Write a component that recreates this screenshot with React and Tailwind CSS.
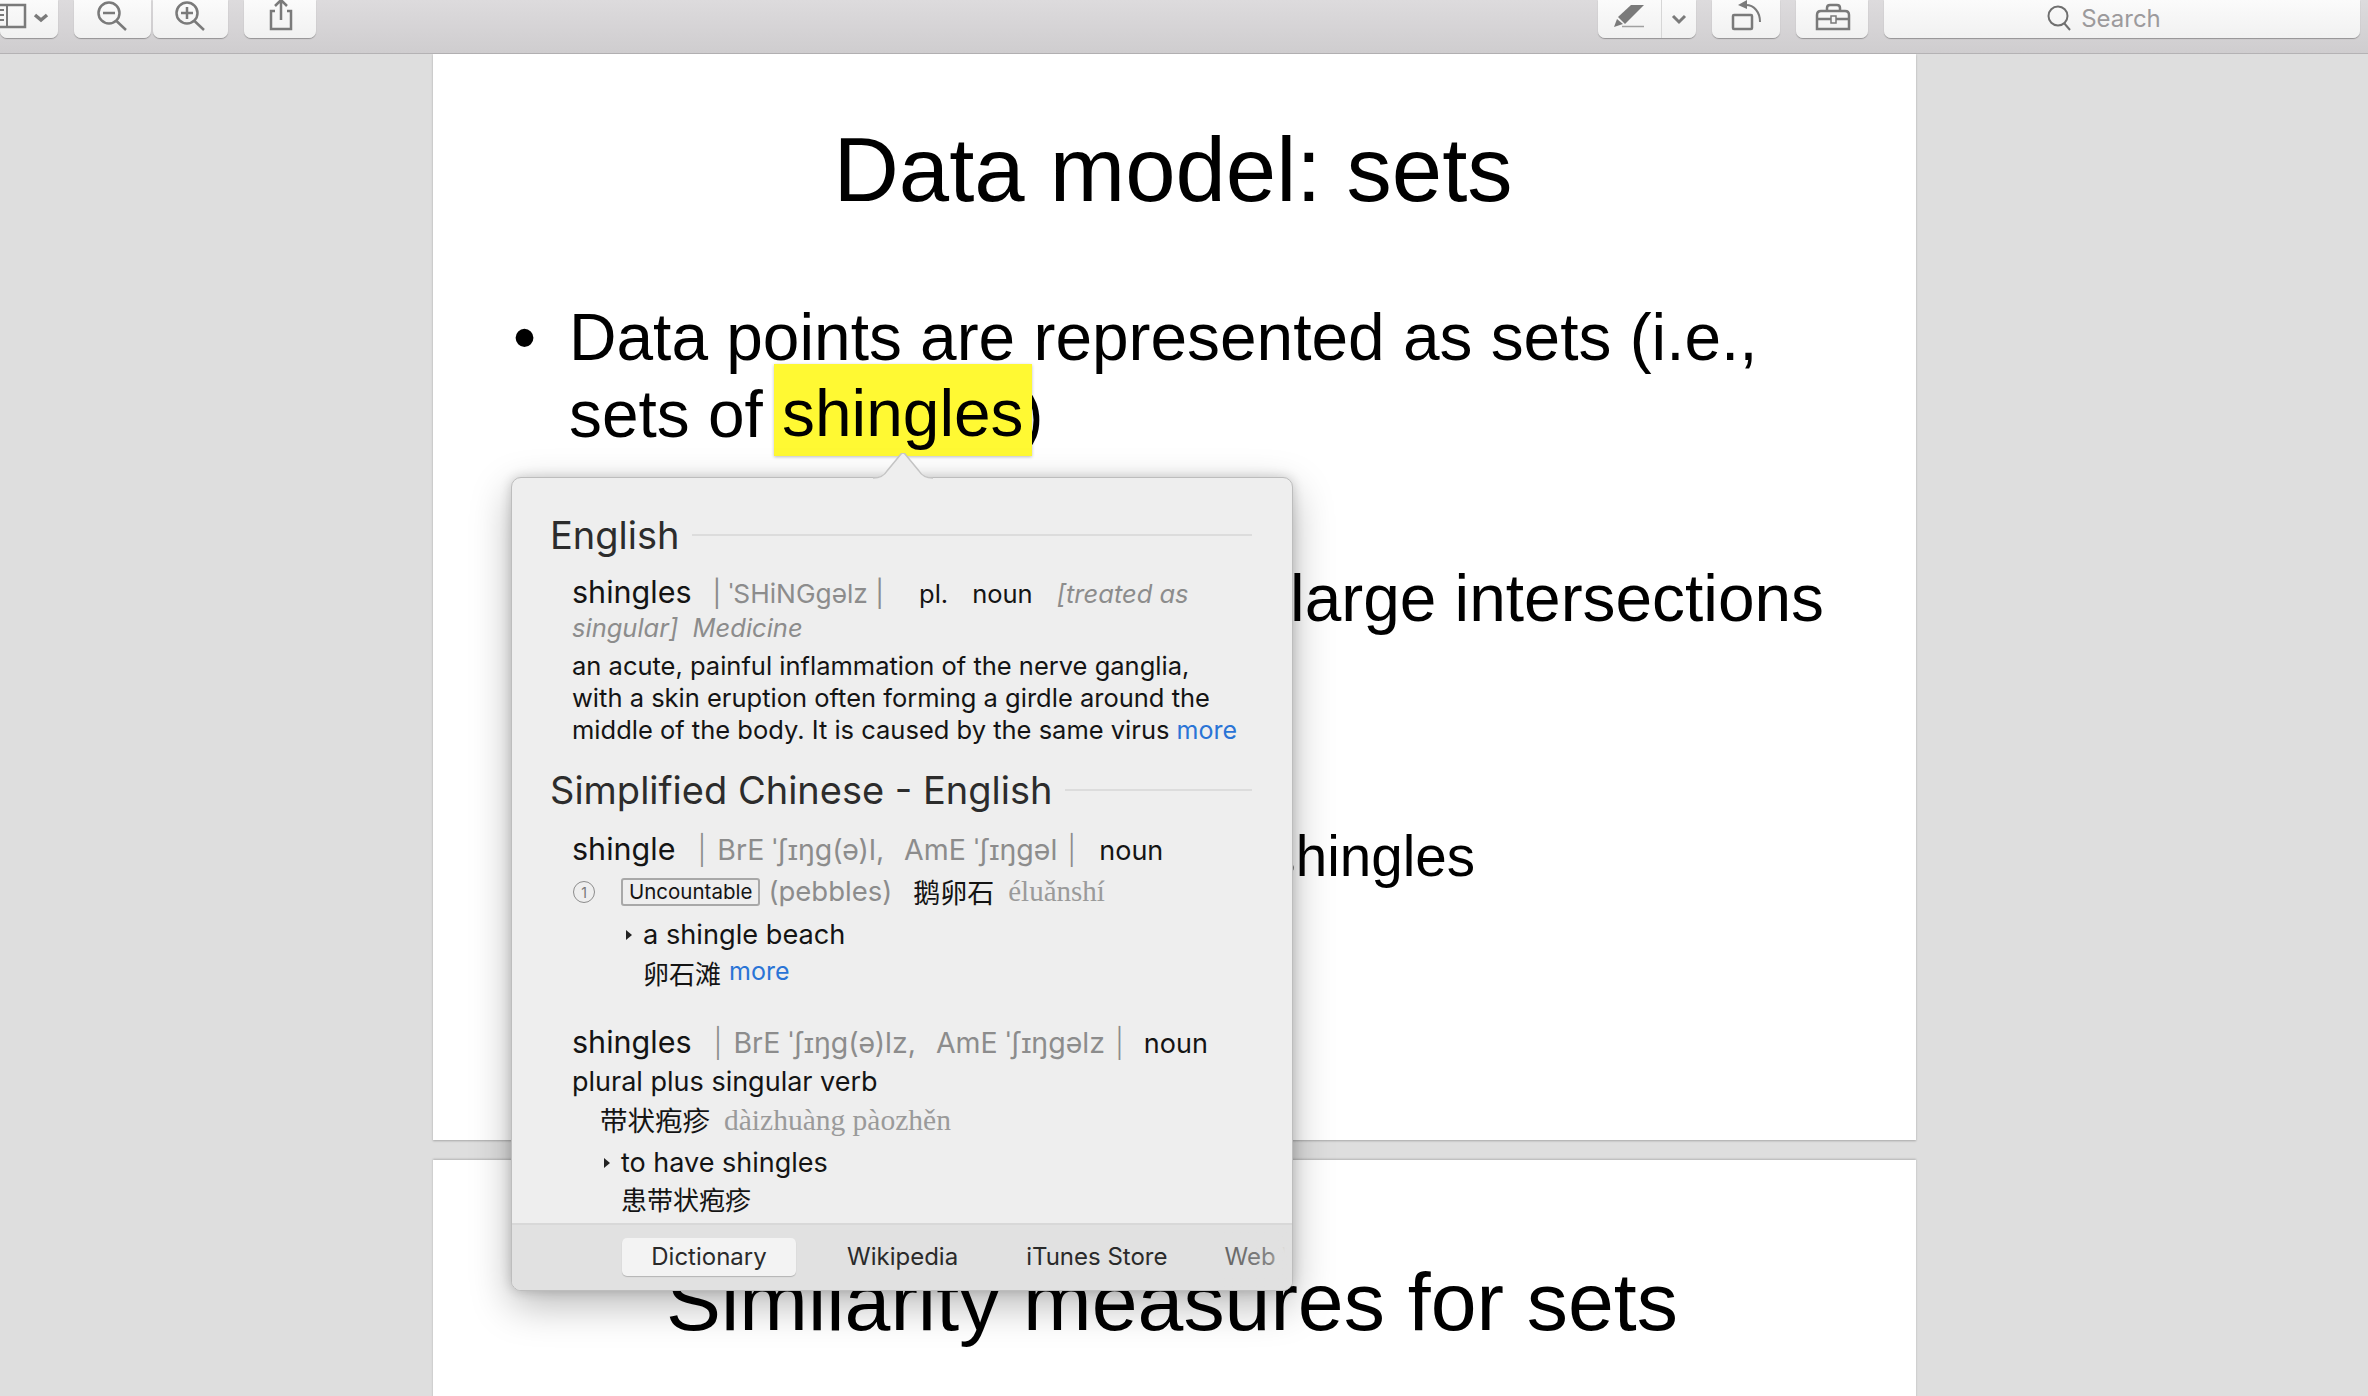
import React from "react";

const ui = "font-['Inter','Noto_Sans_CJK_SC',sans-serif]";
const cjk = "font-['Noto_Sans_CJK_SC',sans-serif]";
const pinyin = "font-['Liberation_Serif',serif] text-[#9a9a9a]";

function ToolButton({ className = "", children }) {
  return (
    <div
      className={
        "h-[38px] shrink-0 flex items-center justify-center rounded-b-[7px] bg-gradient-to-b from-[#fbfbfb] to-[#f1f1f1] shadow-[0_1px_1px_rgba(0,0,0,0.3)] " +
        className
      }
    >
      {children}
    </div>
  );
}

function Toolbar() {
  const stroke = { stroke: "#7a7a7a", strokeWidth: 2.5, fill: "none" };
  return (
    <div className="h-[54px] flex bg-gradient-to-b from-[#dddbdd] to-[#cfcdcf] border-b border-[#b4b2b4]">
      <ToolButton className="w-[58px]">
        <svg width="58" height="38">
          <path d="M-4 5H25V27H-4" {...stroke} />
          <path d="M7 5V27M-2 10H4M-2 15H4M-2 20H4" {...stroke} strokeWidth="2" />
          <path d="M35 15L41 20L47 15" {...stroke} strokeWidth="3.500" />
        </svg>
      </ToolButton>
      <ToolButton className="w-[77px] ml-[16px]">
        <svg width="77" height="38">
          <circle cx="35" cy="13" r="10.500" {...stroke} />
          <path d="M29 13H41M42.500 21L52 30" {...stroke} />
        </svg>
      </ToolButton>
      <ToolButton className="w-[75px] ml-[2px]">
        <svg width="75" height="38">
          <circle cx="34" cy="13" r="10.500" {...stroke} />
          <path d="M28 13H40M34 7V19M41.500 21L51 30" {...stroke} />
        </svg>
      </ToolButton>
      <ToolButton className="w-[72px] ml-[16px]">
        <svg width="72" height="38">
          <path d="M31 11H27V29H47V11H43" {...stroke} />
          <path d="M37 20V1M31 6L37 0L43 6" {...stroke} />
        </svg>
      </ToolButton>
      <div className="flex-1" />
      <ToolButton className="w-[98px]">
        <div className="w-[64px] h-full flex items-center justify-center border-r border-[#d6d6d6]">
          <svg width="63" height="38">
            <path d="M20 17L33 5H46L27 24Z" fill="#7a7a7a" />
            <path d="M19 19L16 27L25 24Z" fill="#7a7a7a" />
            <path d="M24 26.500H46" stroke="#a0a0a0" strokeWidth="1.500" />
          </svg>
        </div>
        <div className="flex-1 flex items-center justify-center">
          <svg width="16" height="12">
            <path d="M2 3L8 9L14 3" {...stroke} strokeWidth="3" />
          </svg>
        </div>
      </ToolButton>
      <ToolButton className="w-[68px] ml-[16px]">
        <svg width="68" height="38">
          <rect x="21" y="15" width="19" height="14" rx="1" {...stroke} />
          <path d="M34 5C42 5 48 12 48 22" {...stroke} strokeWidth="2" />
          <path d="M26 5L35 0V9Z" fill="#7a7a7a" />
        </svg>
      </ToolButton>
      <ToolButton className="w-[72px] ml-[16px]">
        <svg width="72" height="38">
          <path d="M21 19V15Q21 11 25 11H49Q53 11 53 15V29H21ZM21 19H53" {...stroke} />
          <path d="M31 11V8Q31 5 34 5H41Q44 5 44 8V11" {...stroke} />
          <rect x="35" y="16" width="5" height="7" fill="#f6f6f6" stroke="#7a7a7a" strokeWidth="1.500" />
        </svg>
      </ToolButton>
      <ToolButton className="w-[476px] ml-[16px] mr-[8px] gap-[10px] pr-[36px]">
        <svg width="24" height="38">
          <circle cx="11" cy="16" r="9.500" stroke="#6f6f6f" strokeWidth="2" fill="none" />
          <path d="M17 23L23 30" stroke="#6f6f6f" strokeWidth="2" />
        </svg>
        <span className={ui + " text-[24px] leading-[34px] text-[#9c9a9c]"}>Search</span>
      </ToolButton>
    </div>
  );
}

function Heading({ children }) {
  return (
    <div className="h-[40px] flex items-center gap-[12px] pl-[38px] pr-[40px]">
      <span className={"text-[38px] leading-[40px] text-[#2c2c2c] whitespace-nowrap"}>{children}</span>
      <div className="flex-1 h-[2px] bg-[#dcdcdc]" />
    </div>
  );
}

function Triangle() {
  return (
    <svg width="8" height="12" className="shrink-0">
      <path d="M1 1L7 6L1 11Z" fill="#222" />
    </svg>
  );
}

function Pron({ bre, ame }) {
  return (
    <span className="ml-[22px] text-[28.500px] text-[#8c8c8c]">
      <span className="font-light mr-[11px]">|</span>
      <span>{bre}</span>
      <span className="ml-[20px]">{ame}</span>
      <span className="font-light ml-[10px]">|</span>
    </span>
  );
}

function Popover() {
  return (
    <div className="absolute left-[511px] top-[477px] w-[782px] h-[814px] z-20">
      {/* tail */}
      <svg width="60" height="26" className="absolute left-[362px] top-[-24px] z-10">
        <path
          d="M0 25Q10 25 14 18L28 1Q30 -1 32 1L46 18Q50 25 60 25"
          fill="#eeeeee"
          stroke="#c4c4c4"
          strokeWidth="1.500"
        />
      </svg>
      <div
        className={
          ui +
          " w-full h-full flex flex-col rounded-[10px] overflow-hidden bg-[#eeeeee] border border-[#bdbdbd] shadow-[0_0_12px_rgba(0,0,0,0.18),0_14px_40px_rgba(0,0,0,0.28)] text-[#141414]"
        }
      >
        <div className="h-[745px] shrink-0 overflow-hidden pt-[37px]">
          <Heading>English</Heading>

          <div className="pl-[60px] pr-[30px] mt-[19px]">
            <div className="h-[36px] flex items-baseline whitespace-nowrap">
              <span className="text-[30.500px] leading-[36px]">shingles</span>
              <span className="ml-[21px] text-[26.300px] text-[#8c8c8c]">| ˈSHiNGgəlz |</span>
              <span className="ml-[35px] text-[25.500px]">pl.</span>
              <span className="ml-[24px] text-[25.500px]">noun</span>
              <span className="ml-[24px] text-[25.500px] italic text-[#8c8c8c]">[treated as</span>
            </div>
            <div className="mt-[2px] h-[32px] text-[25.500px] leading-[32px] italic text-[#8c8c8c] whitespace-nowrap">
              singular]&nbsp;&nbsp;Medicine
            </div>
            <p className="mt-[6px] text-[25.500px] leading-[32px] whitespace-nowrap">
              an acute, painful inflammation of the nerve ganglia,
              <br />
              with a skin eruption often forming a girdle around the
              <br />
              middle of the body. It is caused by the same virus{" "}
              <span className="text-[#2a74d6] text-[25px]">more</span>
            </p>
          </div>

          <div className="mt-[24px]">
            <Heading>Simplified Chinese - English</Heading>
          </div>

          <div className="pl-[60px] pr-[30px]">
            <div className="mt-[19px] h-[36px] flex items-baseline whitespace-nowrap">
              <span className="text-[30.500px] leading-[36px]">shingle</span>
              <Pron bre="BrE ˈʃɪŋg(ə)l," ame="AmE ˈʃɪŋgəl" />
              <span className="ml-[23px] text-[27px]">noun</span>
            </div>
            <div className="mt-[9px] h-[36px] flex items-center whitespace-nowrap">
              <span className="ml-[1px] w-[22px] h-[22px] flex items-center justify-center rounded-full border border-[#8c8c8c] text-[14px] text-[#777]">
                1
              </span>
              <span className="ml-[26px] h-[28px] px-[6px] flex items-center rounded-[3px] border-2 border-[#a8a8a8] text-[20.500px]">
                Uncountable
              </span>
              <span className="ml-[8px] text-[27.500px] text-[#8c8c8c]">(pebbles)</span>
              <span className={cjk + " ml-[21px] text-[27px]"}>鹅卵石</span>
              <span className={pinyin + " ml-[14px] text-[29px]"}>éluǎnshí</span>
            </div>
            <div className="mt-[9px] h-[32px] pl-[53px] flex items-center gap-[10px] text-[27.200px] whitespace-nowrap">
              <Triangle />
              <span>a shingle beach</span>
            </div>
            <div className="mt-[3px] h-[36px] pl-[71px] flex items-center gap-[8px] whitespace-nowrap">
              <span className={cjk + " text-[26px]"}>卵石滩</span>
              <span className="text-[25px] text-[#2a74d6]">more</span>
            </div>

            <div className="mt-[32px] h-[36px] flex items-baseline whitespace-nowrap">
              <span className="text-[30.500px] leading-[36px]">shingles</span>
              <Pron bre="BrE ˈʃɪŋg(ə)lz," ame="AmE ˈʃɪŋgəlz" />
              <span className="ml-[20px] text-[27px]">noun</span>
            </div>
            <div className="mt-[8px] h-[32px] text-[27px] leading-[32px] whitespace-nowrap">plural plus singular verb</div>
            <div className="mt-[4px] h-[36px] pl-[28px] flex items-center gap-[14px] whitespace-nowrap">
              <span className={cjk + " text-[27.500px]"}>带状疱疹</span>
              <span className={pinyin + " text-[29.500px]"}>dàizhuàng pàozhěn</span>
            </div>
            <div className="mt-[9px] h-[32px] pl-[31px] flex items-center gap-[10px] text-[27px] whitespace-nowrap">
              <Triangle />
              <span>to have shingles</span>
            </div>
            <div className={cjk + " mt-[1px] h-[36px] pl-[49px] flex items-center text-[26px] whitespace-nowrap"}>
              患带状疱疹
            </div>
          </div>
        </div>

        {/* tabs */}
        <div className="flex-1 relative flex items-start pt-[13px] pl-[110px] bg-[#e1e1e1] border-t-2 border-[#d8d8d8] text-[24px] text-[#2a2a2a] whitespace-nowrap overflow-hidden">
          <div className="w-[174px] h-[38px] shrink-0 flex items-center justify-center rounded-[5px] bg-[#f3f3f3] shadow-[0_1px_1px_rgba(0,0,0,0.2)]">
            Dictionary
          </div>
          <div className="ml-[51px] h-[38px] flex items-center">Wikipedia</div>
          <div className="ml-[68px] h-[38px] flex items-center">iTunes Store</div>
          <div className="ml-[57px] h-[38px] flex items-center">Web Videos</div>
          <div className="absolute right-0 top-0 w-[70px] h-full bg-gradient-to-r from-[#e1e1e1]/30 via-[#e1e1e1]/50 to-[#e1e1e1] via-70% to-90%" />
        </div>
      </div>
    </div>
  );
}

export default function App() {
  return (
    <div className="relative h-[1396px] overflow-hidden bg-[#dedede] font-['Liberation_Sans',sans-serif]">
      <Toolbar />
      <div className="ml-[433px] w-[1483px]">
        <div className="h-[1086px] bg-white shadow-[0_1px_2px_rgba(0,0,0,0.25)] text-black overflow-hidden">
          <h1 className="pt-[65px] text-center text-[90.500px] leading-[102px] pr-[3px]">Data model: sets</h1>
          <div className="mt-[78px] flex text-[65.800px] leading-[77px]">
            <span className="ml-[80px] w-[56px] shrink-0">•</span>
            <div className="whitespace-nowrap">
              Data points are represented as sets (i.e.,
              <br />
              sets of{" "}
              <span className="relative z-10 inline-block h-[92px] leading-[99px] -mt-[12px] -mb-[4px] px-[8px] ml-[-7px] bg-[#fff933] shadow-[0_1px_3px_rgba(0,0,0,0.25)] align-top">
                shingles
              </span>
              <span className="ml-[-10px]">)</span>
            </div>
          </div>
          <div className="mt-[107px] pr-[92px] text-right text-[65.800px] leading-[77px] whitespace-nowrap">
            large intersections
          </div>
          <div className="mt-[181px] pr-[441px] text-right text-[56.600px] leading-[77px] whitespace-nowrap">
            shingles
          </div>
        </div>
        <div className="mt-[20px] h-[300px] bg-white shadow-[0_-1px_2px_rgba(0,0,0,0.2)] text-black text-center">
          <h1 className="pt-[90px] pr-[5px] text-[82.400px] leading-[102px]">Similarity measures for sets</h1>
        </div>
      </div>
      <Popover />
    </div>
  );
}
